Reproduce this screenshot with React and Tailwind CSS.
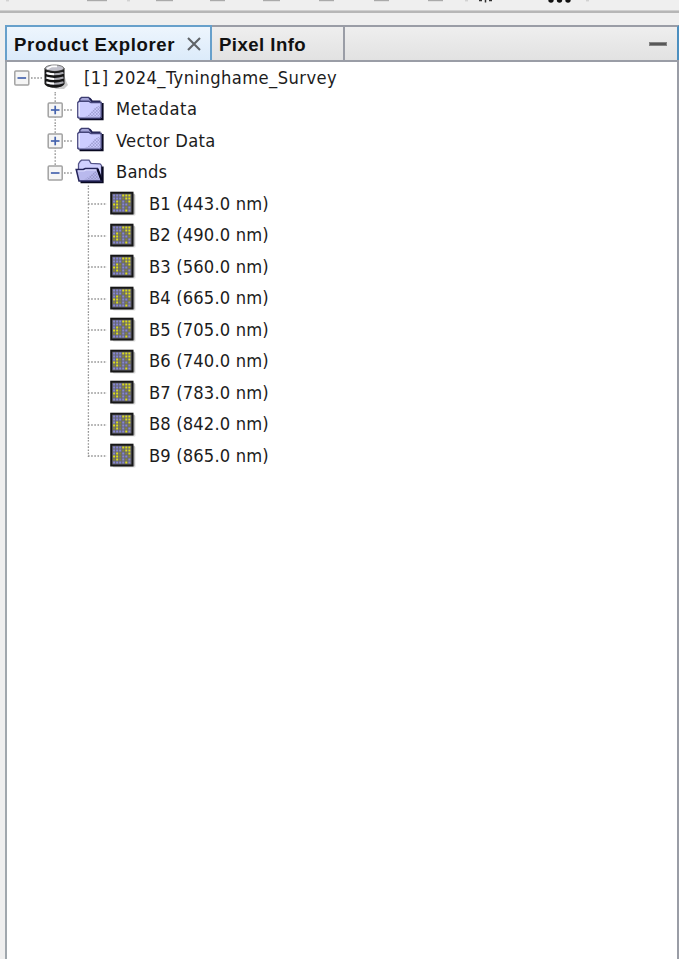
import React from "react";

const tree = [
  { kind: "product", label: "[1] 2024_Tyninghame_Survey", spacing: "tracking-[0.42px]" },
  { kind: "folder", label: "Metadata", spacing: "tracking-[0.5px]" },
  { kind: "folder", label: "Vector Data", spacing: "tracking-[0.3px]" },
  { kind: "open", label: "Bands", spacing: "tracking-[0.15px]" },
  { kind: "band", label: "B1 (443.0 nm)" },
  { kind: "band", label: "B2 (490.0 nm)" },
  { kind: "band", label: "B3 (560.0 nm)" },
  { kind: "band", label: "B4 (665.0 nm)" },
  { kind: "band", label: "B5 (705.0 nm)" },
  { kind: "band", label: "B6 (740.0 nm)" },
  { kind: "band", label: "B7 (783.0 nm)" },
  { kind: "band", label: "B8 (842.0 nm)" },
  { kind: "band", label: "B9 (865.0 nm)", last: true },
];

function Dots({ x1, y1, x2, y2 }) {
  return <line x1={x1} y1={y1} x2={x2} y2={y2} stroke="#949494" strokeWidth="1.3" strokeDasharray="1.6 1.55" />;
}

function Toggle({ x, plus }) {
  return (
    <g>
      <rect x={x - 7} y="9" width="14" height="14" rx="1" fill="#f5f5f5" stroke="#a2a2a2" strokeWidth="1.5" />
      <path d={`M${x - 4.3} 16h8.6`} stroke="#4664ae" strokeWidth="1.7" />
      {plus && <path d={`M${x} 11.7v8.6`} stroke="#4664ae" strokeWidth="1.7" />}
    </g>
  );
}

function Database() {
  return (
    <g>
      <path d="M54 26l9-18 3 11 2 4-4 4H56z" fill="#b4b4b4" opacity=".7" />
      <path d="M44.5 6v15.5c1 5.6 19 5.6 20 0V6z" fill="#141414" />
      <path d="M46 10.8q8.5 3 17.5 0M46 15.5q8.5 3 17.5 0M46 20.2q8.5 3 17.5 0" fill="none" stroke="#a9a9b0" strokeWidth="2" />
      <path d="M47 11.2q3.5 1 7 1M47 15.9q3.5 1 7 1M47 20.6q3.5 1 7 1" fill="none" stroke="#fff" strokeWidth="2" />
      <ellipse cx="54.5" cy="6.2" rx="9.3" ry="3.2" fill="#c0c0ca" stroke="#777" strokeWidth="1" />
      <path d="M47 6.8l5-2.5h5" fill="none" stroke="#fff" strokeWidth="1.7" />
      <path d="M46 8.4q9 3 17.5 0" fill="none" stroke="#222" strokeWidth="1.4" />
    </g>
  );
}

function Shade() {
  return (
    <pattern id="shade" width="3.2" height="3.2" patternUnits="userSpaceOnUse">
      <rect width="1.6" height="1.6" fill="#9090c4" />
      <rect x="1.6" y="1.6" width="1.6" height="1.6" fill="#9090c4" />
    </pattern>
  );
}

function Folder() {
  return (
    <g>
      <defs><Shade /></defs>
      <path d="M79.5 25.2h23V9" fill="none" stroke="#080820" strokeWidth="2.2" />
      <path d="M79.8 7.5V5L81.5 3.4h7L91 5.4l1.5 2.6" fill="#a5a5d8" stroke="#3c3c70" strokeWidth="1.4" />
      <path d="M89.5 4.2l2.5 3.2h8.5" fill="none" stroke="#202050" strokeWidth="1.6" />
      <path d="M77.8 23.3V8.5l1.2-1.2h10l2 1.2h10.2v14.6l-1 1H78.8z" fill="#ccccff" stroke="#45457a" strokeWidth="1.4" />
      <path d="M79.2 22V9" fill="none" stroke="#ececff" strokeWidth="1.2" />
      <path d="M84 23.3l5-3 5-6 6-3v12z" fill="url(#shade)" opacity=".75" />
    </g>
  );
}

function OpenFolder() {
  return (
    <g>
      <path d="M78.5 12V7l1.5-2.5L81.5 3.2h7.5l2 3.2 9 .5 1.5 1.5v16" fill="#d0d0ff" stroke="#55558a" strokeWidth="1.3" />
      <path d="M80.5 25h22V9.5" fill="none" stroke="#080820" strokeWidth="2.3" />
      <path d="M76.2 12.5h7l2-1h12.2l4 11.5v1H79z" fill="#b9b9ed" stroke="#25255a" strokeWidth="1.5" />
      <path d="M78 14h6l2-1h10.5" fill="none" stroke="#dedeff" strokeWidth="1.2" />
      <path d="M84 23l12-9 4 9z" fill="url(#shade)" opacity=".8" />
      <path d="M97.5 12l4.2 11.5" stroke="#080820" strokeWidth="2.2" />
    </g>
  );
}

const raster = ["bbbyyy", "bbboyy", "byoboy", "yyobbo", "oyobob", "bbbbyb"];
const cellColors = { b: "#8585d4", y: "#dfdf18", o: "#8b8b35" };

function Band() {
  return (
    <g>
      <rect x="113" y="6.5" width="22.5" height="21" rx="1" fill="#aaa" opacity=".4" />
      <rect x="112" y="5.5" width="22.7" height="20.8" rx="1" fill="#888" opacity=".6" />
      <rect x="111.2" y="4.7" width="21.3" height="20.8" fill="#666670" stroke="#161616" strokeWidth="2" />
      {raster.map((line, r) =>
        [...line].map((c, i) => (
          <rect key={`${r}-${i}`} x={113.1 + i * 3.05} y={6.5 + r * 3} width="2" height="2" fill={cellColors[c]} />
        ))
      )}
    </g>
  );
}

function TreeRow({ item }) {
  const { kind, label, last, spacing = "tracking-[0.14px]" } = item;
  return (
    <li className="flex h-[31.5px] items-center">
      {kind === "product" && (
        <svg className="shrink-0 overflow-visible" width="68" height="31.5" viewBox="7 0 68 31.5">
          <Dots x1={31} y1={16} x2={42} y2={16} />
          <Dots x1={55.2} y1={30} x2={55.2} y2={32} />
          <Toggle x={21.8} />
          <Database />
        </svg>
      )}
      {(kind === "folder" || kind === "open") && (
        <svg className="shrink-0 overflow-visible" width="100" height="31.5" viewBox="7 0 100 31.5">
          <Dots x1={55.2} y1={0} x2={55.2} y2={kind === "open" ? 9 : 32} />
          <Dots x1={64} y1={16} x2={72} y2={16} />
          {kind === "open" && <Dots x1={88.4} y1={28.5} x2={88.4} y2={32} />}
          <Toggle x={55.2} plus={kind === "folder"} />
          {kind === "folder" ? <Folder /> : <OpenFolder />}
        </svg>
      )}
      {kind === "band" && (
        <svg className="shrink-0 overflow-visible" width="133" height="31.5" viewBox="7 0 133 31.5">
          <Dots x1={88.4} y1={0} x2={88.4} y2={last ? 17 : 31.5} />
          <Dots x1={88} y1={16} x2={107} y2={16} />
          <Band />
        </svg>
      )}
      <span className={"mb-[2px] ml-[9px] whitespace-pre text-[18.2px] leading-[29px] text-[#1c1c1c] " + spacing}>{label}</span>
    </li>
  );
}

function ToolbarEdge() {
  const grays = [[87, 20], [156, 17], [210, 15], [263, 17], [319, 15], [374, 15], [428, 15]];
  return (
    <svg className="block" width="679" height="10" viewBox="0 0 679 10">
      {grays.map(([x, w]) => <rect key={x} x={x} y="0" width={w} height="1.2" fill="#aaaaaa" />)}
      {[6, 127, 465, 586].map((x) => <rect key={x} x={x} y="0" width="3" height="1.4" fill="#d2d2d2" />)}
      <path d="M479 .5h3M485.5 0v2.5M489 .5h3" stroke="#333" strokeWidth="1.5" />
      {[551, 559.5, 568].map((x) => <circle key={x} cx={x} cy="0" r="2.7" fill="#111" />)}
    </svg>
  );
}

export default function App() {
  return (
    <div className="flex h-[959px] w-[679px] flex-col overflow-hidden bg-[#efefef] [font-family:'DejaVu_Sans_Condensed','DejaVu_Sans',sans-serif]">
      <ToolbarEdge />
      <div className="h-[3px] shrink-0 border-t border-[#cfcfcf] bg-[#b6b6b6]" />
      <section className="mt-3 ml-[5px] flex min-h-0 flex-1 flex-col">
        <header className="flex h-[37px] shrink-0 border-b-2 border-[#9a9da6] bg-linear-to-b from-[#efefef] to-[#e2e2e2] text-[18.6px] font-bold text-[#111] [font-family:'Liberation_Sans',Arial,sans-serif]">
          <div className="flex w-[207px] items-center border-t-2 border-r-2 border-l-2 border-[#67a0cb] bg-linear-to-b from-[#edf5fd] to-[#dcebfa] pt-[2px] pl-[7px]">
            <span className="w-[173px] whitespace-pre tracking-[0.65px]">Product Explorer</span>
            <svg className="mb-px" width="14" height="14" viewBox="0 0 14 14"><path d="M1 1l12 12M13 1L1 13" stroke="#606468" strokeWidth="2.1" /></svg>
          </div>
          <div className="flex w-[133px] items-center border-t-2 border-r-2 border-[#9a9da6] pt-[2px] pl-[7px]">
            <span className="whitespace-pre tracking-[0.45px]">Pixel Info</span>
          </div>
          <div className="flex flex-1 items-center justify-end border-t-2 border-r-2 border-t-[#9a9da6] border-r-[#4c8fc0] pr-[10px]">
            <div className="mt-px h-[4px] w-[18px] border border-[#858585] bg-[#585858]" />
          </div>
        </header>
        <ul className="flex-1 border-r-2 border-l-2 border-r-[#9a9da6] border-l-[#a0a7ad] bg-white pt-[0.4px]">
          {tree.map((item) => <TreeRow key={item.label} item={item} />)}
        </ul>
      </section>
    </div>
  );
}
